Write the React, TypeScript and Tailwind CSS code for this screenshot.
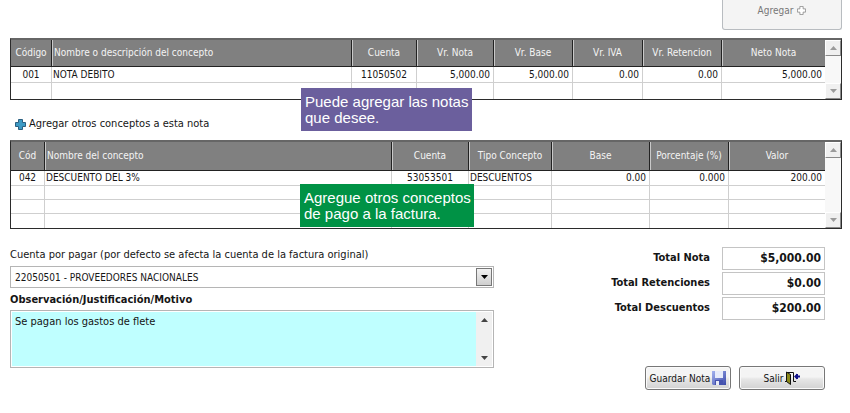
import React, { useEffect, useRef, useState } from "react";
import clsx from "clsx";

type Align = "left" | "center" | "right";

interface Column {
  title: string;
  width: string;
  align: Align;
  headLeft?: boolean;
}

interface GridProps {
  label: string;
  columns: Column[];
  rows: string[][];
  headHeight: string;
  rowHeight: string;
}

const notaColumns: Column[] = [
  { title: "Código", width: "w-[40px]", align: "center" },
  { title: "Nombre o descripción del concepto", width: "", align: "left", headLeft: true },
  { title: "Cuenta", width: "w-[65px]", align: "center" },
  { title: "Vr. Nota", width: "w-[77px]", align: "right" },
  { title: "Vr. Base", width: "w-[79px]", align: "right" },
  { title: "Vr. IVA", width: "w-[70px]", align: "right" },
  { title: "Vr. Retencion", width: "w-[79px]", align: "right" },
  { title: "Neto Nota", width: "w-[104px]", align: "right" },
];

const notaRows = [
  ["001", "NOTA DEBITO", "11050502", "5,000.00", "5,000.00", "0.00", "0.00", "5,000.00"],
  ["", "", "", "", "", "", "", ""],
];

const conceptoColumns: Column[] = [
  { title: "Cód", width: "w-[33px]", align: "center" },
  { title: "Nombre del concepto", width: "", align: "left", headLeft: true },
  { title: "Cuenta", width: "w-[77px]", align: "center" },
  { title: "Tipo Concepto", width: "w-[83px]", align: "left" },
  { title: "Base", width: "w-[98px]", align: "right" },
  { title: "Porcentaje (%)", width: "w-[79px]", align: "right" },
  { title: "Valor", width: "w-[97px]", align: "right" },
];

const conceptoRows = [
  ["042", "DESCUENTO DEL 3%", "53053501", "DESCUENTOS", "0.00", "0.000", "200.00"],
  ["", "", "", "", "", "", ""],
  ["", "", "", "", "", "", ""],
  ["", "", "", "", "", "", ""],
];

function Arrow({ up }: { up?: boolean }) {
  return (
    <svg width="7" height="4" viewBox="0 0 7 4">
      <path d={up ? "M0 4L3.5 0L7 4Z" : "M0 0L3.5 4L7 0Z"} fill="currentColor" />
    </svg>
  );
}

function ScrollButton({ up }: { up?: boolean }) {
  return (
    <button
      type="button"
      aria-label={up ? "Subir" : "Bajar"}
      className="flex h-4 w-4 items-center justify-center border border-t-white border-l-white border-r-[#8a8a8a] border-b-[#8a8a8a] bg-[#f0f0f0] text-[#9b9b9b]"
    >
      <Arrow up={up} />
    </button>
  );
}

function Grid({ label, columns, rows, headHeight, rowHeight }: GridProps) {
  return (
    <div className="flex border border-t-2 border-[#2b2b2b] border-t-[#666]">
      <table
        aria-label={label}
        className="flex-1 table-fixed border-separate border-spacing-0 text-[10px] leading-[14px]"
      >
        <colgroup>
          {columns.map((col) => (
            <col key={col.title} className={col.width} />
          ))}
        </colgroup>
        <thead>
          <tr className={headHeight}>
            {columns.map((col, i) => (
              <th
                key={col.title}
                className={clsx(
                  "border-b border-b-[#222] bg-[#808080] p-0 font-normal whitespace-nowrap text-[#f4f4f4]",
                  i > 0 && "border-l border-l-[#222] shadow-[inset_1px_0_0_#c9c9c9]",
                  col.headLeft ? "pl-[2px] text-left" : "text-center"
                )}
              >
                {col.title}
              </th>
            ))}
          </tr>
        </thead>
        <tbody>
          {rows.map((row, r) => (
            <tr key={r} className={rowHeight}>
              {row.map((cell, i) => (
                <td
                  key={i}
                  className={clsx(
                    "p-0 whitespace-nowrap",
                    r < rows.length - 1 && "border-b border-b-[#cfcfcf]",
                    i > 0 && "border-l border-l-[#cfcfcf]",
                    columns[i].align === "left" && "pl-px text-left",
                    columns[i].align === "center" && "text-center",
                    columns[i].align === "right" && "pr-[3px] text-right"
                  )}
                >
                  {cell}
                </td>
              ))}
            </tr>
          ))}
        </tbody>
      </table>
      <div className="flex flex-col justify-between bg-[#f8f8f8]">
        <ScrollButton up />
        <ScrollButton />
      </div>
    </div>
  );
}

function PlusIcon({ fill, stroke, size }: { fill: string; stroke: string; size: number }) {
  return (
    <svg width={size} height={size} viewBox="0 0 11 11">
      <path
        d="M3.5 0.5H7.5V3.5H10.5V7.5H7.5V10.5H3.5V7.5H0.5V3.5H3.5Z"
        fill={fill}
        stroke={stroke}
      />
    </svg>
  );
}

function SaveIcon() {
  return (
    <svg width="14" height="14" viewBox="0 0 14 14">
      <defs>
        <linearGradient id="disk" x1="0" y1="0" x2="1" y2="1">
          <stop offset="0" stopColor="#a5b4f0" />
          <stop offset="1" stopColor="#3a48a8" />
        </linearGradient>
      </defs>
      <path d="M0 0H14V14H1L0 13Z" fill="url(#disk)" />
      <path d="M3 0H11V7H3Z" fill="#e6ebfa" />
      <path d="M3 9H11V14H3Z" fill="#4653ae" />
      <path d="M4 10H7V14H4Z" fill="#e8ebf7" />
    </svg>
  );
}

function ExitIcon() {
  return (
    <svg width="15" height="14" viewBox="0 0 15 14">
      <path d="M1 1.5H8.5V10.5H11" fill="none" stroke="#111" />
      <path d="M0 10.5H3" stroke="#111" />
      <path d="M1.5 1L5.5 3.5V13.5L1.5 10.5Z" fill="#8c8a18" stroke="#111" />
      <path d="M9 5.5L12 2.5V4.5H15V6.5H12V8.5Z" fill="#14148c" />
      <path d="M11 3H13V8H11Z" fill="#14148c" />
    </svg>
  );
}

const actionButton =
  "flex h-6 w-[86px] items-center justify-center gap-[2px] rounded-[3px] border border-[#777] bg-linear-to-b from-[#f4f4f4] from-45% via-[#e6e6e6] via-55% to-[#d2d2d2] text-[10px] whitespace-nowrap shadow-[inset_0_0_0_1px_#fafafa]";

function Total({ id, label, value }: { id: string; label: string; value: string }) {
  return (
    <div className="flex items-center justify-end gap-3">
      <label htmlFor={id} className="text-[11px]">
        {label}
      </label>
      <input
        id={id}
        readOnly
        defaultValue={value}
        className="h-[23px] w-[103px] border border-[#c4c4c4] px-[3px] pb-[2px] text-right text-[12px] font-bold"
      />
    </div>
  );
}

function App() {
  const [motivo, setMotivo] = useState("Se pagan los gastos de flete");
  const motivoRef = useRef<HTMLTextAreaElement>(null);

  // leave the cursor at the end of the note
  useEffect(() => {
    const el = motivoRef.current!;
    el.focus();
    el.setSelectionRange(el.value.length, el.value.length);
  }, []);

  return (
    <main className="min-h-screen overflow-hidden bg-white pr-2 pl-[10px] font-['DejaVu_Sans_Condensed','DejaVu_Sans',sans-serif] font-stretch-condensed text-[#151515]">
      <div className="flex justify-end">
        <button
          type="button"
          disabled
          className="flex h-[30px] w-[120px] items-center justify-center gap-1 rounded-b-[3px] border border-t-0 border-[#b8bcc0] bg-[#f4f4f4] pb-2 text-[10px] text-[#777]"
        >
          Agregar <PlusIcon fill="#fff" stroke="#888" size={9} />
        </button>
      </div>

      <section className="relative mt-2">
        <Grid
          label="Notas"
          columns={notaColumns}
          rows={notaRows}
          headHeight="h-[27px]"
          rowHeight="h-4"
        />
        <div className="absolute top-[50px] left-[291px] h-[43px] w-[171px] bg-[#6b5f9d] pt-[6px] pl-1 font-['Liberation_Sans',sans-serif] text-[15px] leading-4 text-white">
          Puede agregar las notas que desee.
        </div>
      </section>

      <a href="#otros" className="mt-4 ml-[5px] flex w-fit items-center gap-[3px] text-[11px] leading-4">
        <PlusIcon fill="#3d9ac4" stroke="#2b5f80" size={11} />
        Agregar otros conceptos a esta nota
      </a>

      <section id="otros" className="relative mt-2">
        <Grid
          label="Otros conceptos"
          columns={conceptoColumns}
          rows={conceptoRows}
          headHeight="h-[29px]"
          rowHeight="h-[14px]"
        />
        <div className="absolute top-[44px] left-[290px] h-[43px] w-[174px] bg-[#009245] pt-[6px] pl-1 font-['Liberation_Sans',sans-serif] text-[15px] leading-4 text-white">
          Agregue otros conceptos de pago a la factura.
        </div>
      </section>

      <div className="mt-[18px] flex justify-between pr-[17px]">
        <div className="w-[60%] max-w-[484px]">
          <label htmlFor="cuenta" className="block text-[11px] leading-4 whitespace-nowrap">
            Cuenta por pagar (por defecto se afecta la cuenta de la factura original)
          </label>
          <div className="relative mt-[3px]">
            <select
              id="cuenta"
              className="block h-[22px] w-full appearance-none border border-[#b5b5b5] bg-white pl-1 text-[10px]"
            >
              <option>22050501 - PROVEEDORES NACIONALES</option>
            </select>
            <span className="pointer-events-none absolute top-[2px] right-[2px] flex h-[18px] w-4 items-center justify-center border border-[#777] bg-linear-to-b from-[#f2f2f2] to-[#cfcfcf] text-black">
              <Arrow />
            </span>
          </div>
          <label htmlFor="motivo" className="mt-1 block text-[11px] leading-4 font-bold">
            Observación/Justificación/Motivo
          </label>
          <div className="mt-[2px] flex h-[58px] border border-[#b5b5b5] p-px">
            <textarea
              id="motivo"
              ref={motivoRef}
              value={motivo}
              onChange={(e) => setMotivo(e.target.value)}
              className="flex-1 resize-none overflow-hidden bg-[#bfffff] px-[3px] py-[2px] text-[11px] leading-4 outline-none"
            />
            <div className="flex w-4 flex-col items-center justify-between bg-[#f0f0f0] py-[6px] text-[#444]">
              <Arrow up />
              <Arrow />
            </div>
          </div>
        </div>

        <div className="flex flex-col items-end">
          <div className="flex flex-col gap-[2px] font-bold">
            <Total id="total-nota" label="Total Nota" value="$5,000.00" />
            <Total id="total-retenciones" label="Total Retenciones" value="$0.00" />
            <Total id="total-descuentos" label="Total Descuentos" value="$200.00" />
          </div>
          <div className="mt-[46px] flex gap-2">
            <button type="button" className={actionButton}>
              Guardar Nota <SaveIcon />
            </button>
            <button type="button" className={actionButton}>
              Salir <ExitIcon />
            </button>
          </div>
        </div>
      </div>
    </main>
  );
}

export default App;
